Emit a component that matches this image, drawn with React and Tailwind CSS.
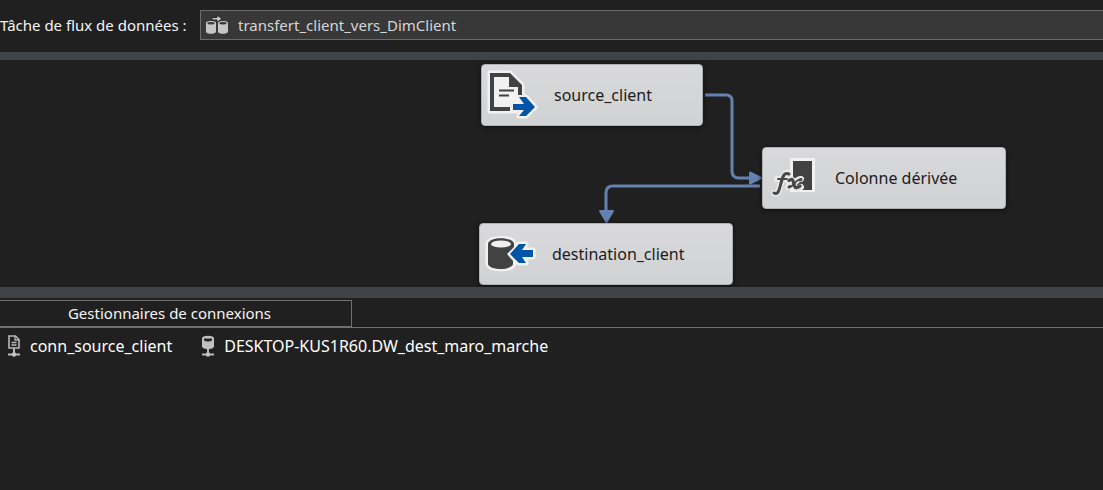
import React from "react";

function FlowTaskIcon() {
  return (
    <svg width="24" height="22" viewBox="0 0 24 22" className="shrink-0" aria-hidden="true">
      <g fill="#c6c6c6">
        <path d="M1 8.500C2 6.500 10 6.500 11 8.500V18c-1 2.400-9 2.400-10 0z" />
        <path d="M13 8.500c1-2 9-2 10 0V18c-1 2.400-9 2.400-10 0z" />
      </g>
      <g fill="#383838">
        <ellipse cx="6" cy="9.200" rx="3.600" ry="1.200" />
        <ellipse cx="18" cy="9.200" rx="3.600" ry="1.200" />
      </g>
      <path d="M7 3.500h5V1L17 4.800 12 8.500V6H7z" fill="#c6c6c6" stroke="#262626" strokeWidth="1" />
    </svg>
  );
}

function FileSourceIcon() {
  return (
    <svg width="52" height="52" viewBox="0 0 52 52" className="shrink-0" aria-hidden="true">
      <g fill="#f1f1f2" stroke="#f1f1f2" strokeWidth="5" strokeLinejoin="round">
        <path d="M3 4h20l12 12v26H3z" />
        <path d="M26 35h11l-5-7h7l9 10-9 9h-7l5-6H26z" />
      </g>
      <path d="M3 4h20l12 12v10h-4V18h-9V8H7v30h16v4H3z" fill="#424242" />
      <path d="M12 21.500h15M12 26.500h10" stroke="#424242" strokeWidth="2.200" />
      <path d="M26 35h11l-5-7h7l9 10-9 9h-7l5-6H26z" fill="#0054a6" />
    </svg>
  );
}

function DerivedColumnIcon() {
  return (
    <svg width="52" height="44" viewBox="0 0 52 44" className="shrink-0" aria-hidden="true">
      <path d="M22 2h25v34H22z" fill="#f1f1f2" />
      <path d="M25 5h19v29H25z" fill="#424242" />
      <g fill="none" stroke="#e9e9ea" strokeWidth="6" strokeLinecap="round" strokeLinejoin="round">
        <path d="M21 17c-5-1-6 3-8 10-2 8-3 12-7 10M9 23h10" />
        <path d="M20 25c4-4 5 0 6 4s3 5 7 2M33 23c-5-1-7 8-13 8" />
      </g>
      <g fill="none" stroke="#484848" strokeLinecap="round" strokeLinejoin="round">
        <path d="M21 18c-5-2-6 2-8 9-2 8-3 12-7 10" strokeWidth="3" />
        <path d="M10 23h9" strokeWidth="1.800" />
        <path d="M21 24.500c4-3 4 0 5 4s3 4 6 1.500" strokeWidth="3.200" />
        <path d="M33 23.500c-5-1-7 7.500-12 7.500" strokeWidth="1.800" />
        <path d="M33 23.500l-1 .5M21 31l1-.5" strokeWidth="3" />
      </g>
    </svg>
  );
}

function DatabaseTargetIcon() {
  return (
    <svg width="52" height="40" viewBox="0 0 52 40" className="shrink-0" aria-hidden="true">
      <g fill="#f1f1f2" stroke="#f1f1f2" strokeWidth="5" strokeLinejoin="round">
        <path d="M3 9C5 3 27 3 29 9v21c-2 6.500-24 6.500-26 0z" />
        <path d="M48 16H37l4-6h-7l-9 10 9 9h7l-4-6h11z" />
      </g>
      <path d="M3 9.500C5 2.500 27 2.500 29 9.500V13l-7 7 6 7v3.500c-3 6-22 6-25 0z" fill="#424242" />
      <ellipse cx="16" cy="10" rx="10" ry="3.600" fill="#f1f1f2" />
      <path d="M48 16H37l4-6h-7l-9 10 9 9h7l-4-6h11z" fill="#0054a6" />
    </svg>
  );
}

function FileConnectionIcon() {
  return (
    <svg width="14" height="22" viewBox="0 0 14 22" className="shrink-0" aria-hidden="true">
      <path d="M2 1h6.500L12 4.500V13H2z" fill="#202020" stroke="#b8b8b8" strokeWidth="1.600" />
      <path d="M8 1v4h4M4.500 7.500h5M4.500 10h5" fill="none" stroke="#b8b8b8" strokeWidth="1.300" />
      <path d="M7 13v6M1 19.500h12" stroke="#b8b8b8" strokeWidth="2" />
      <circle cx="7" cy="19.500" r="2.200" fill="#c4c4c4" />
    </svg>
  );
}

function DatabaseConnectionIcon() {
  return (
    <svg width="14" height="22" viewBox="0 0 14 22" className="shrink-0" aria-hidden="true">
      <path d="M1 3C2 0 12 0 13 3v8.500c-1 3.500-11 3.500-12 0z" fill="#c0c0c0" />
      <path d="M3 3.500h8v2c-2 1.300-6 1.300-8 0z" fill="#262626" />
      <path d="M7 13v6M1 19.500h12" stroke="#b8b8b8" strokeWidth="2" />
      <circle cx="7" cy="19.500" r="2.200" fill="#c4c4c4" />
    </svg>
  );
}

function FlowNode({ position, label, children }) {
  return (
    <button
      type="button"
      className={`absolute flex h-[62px] items-center rounded-[4px] border border-[#aeb0b2] bg-linear-to-b from-[#d9d9dc] to-[#d0d2d3] pl-[5px] text-left text-base whitespace-nowrap text-[#1c1c1c] shadow-[0_1px_5px_#101010] ${position}`}
    >
      {children}
      <span className="pl-[15px]">{label}</span>
    </button>
  );
}

function Connectors() {
  return (
    <svg width="1103" height="227" viewBox="0 0 1103 227" className="absolute top-0 left-0" aria-hidden="true">
      <g fill="none" stroke="#6482b0" strokeWidth="3">
        <path d="M705 35h21q6 0 6 6v70q0 7 7 7h11" />
        <path d="M760 126H613q-7 0-7 7v18" />
      </g>
      <g fill="#6482b0" stroke="#6482b0" strokeWidth="2" strokeLinejoin="round">
        <path d="M750 112.500l11 5.500-11 5.500z" />
        <path d="M600 151h13l-6.500 11z" />
      </g>
    </svg>
  );
}

export default function App() {
  return (
    <div className="flex min-h-screen flex-col overflow-hidden bg-[#202020] font-['Noto_Sans','Open_Sans',sans-serif] text-base text-[#f4f4f4]">
      <header className="flex h-[52px] items-center gap-[13px] pb-[2px] text-[15px]">
        <div className="flex w-[187px] shrink-0 whitespace-nowrap">
          <label htmlFor="task">Tâche de flux de données :</label>
        </div>
        <div className="flex h-[30px] min-w-0 flex-1 items-center gap-[9px] border border-r-0 border-[#6c6c6c] bg-[#383838] pl-1">
          <FlowTaskIcon />
          <select id="task" className="h-full min-w-0 flex-1 appearance-none bg-transparent text-[#d6d6d6] outline-none">
            <option>transfert_client_vers_DimClient</option>
          </select>
        </div>
      </header>

      <div className="h-2 bg-[#3f4246]" />

      <main className="relative h-[227px] overflow-hidden">
        <Connectors />
        <FlowNode position="top-[4px] left-[481px] w-[222px]" label="source_client">
          <FileSourceIcon />
        </FlowNode>
        <FlowNode position="top-[87px] left-[762px] w-[244px]" label="Colonne dérivée">
          <DerivedColumnIcon />
        </FlowNode>
        <FlowNode position="top-[163px] left-[479px] w-[254px]" label="destination_client">
          <DatabaseTargetIcon />
        </FlowNode>
      </main>

      <div className="h-[11px] bg-[#3f4246]" />

      <section className="pt-[2px]">
        <div role="tablist" className="flex border-b border-[#707070]">
          <button
            type="button"
            role="tab"
            aria-selected="true"
            className="h-[27px] w-[352px] border border-l-0 border-[#707070] pr-3 text-center text-[15px]"
          >
            Gestionnaires de connexions
          </button>
        </div>
        <div className="flex items-center gap-[29px] pt-[6px] pl-[7px] text-white">
          <button type="button" className="flex items-center gap-[9px] whitespace-nowrap">
            <FileConnectionIcon />
            conn_source_client
          </button>
          <button type="button" className="flex items-center gap-[9px] whitespace-nowrap">
            <DatabaseConnectionIcon />
            DESKTOP-KUS1R60.DW_dest_maro_marche
          </button>
        </div>
      </section>
    </div>
  );
}
